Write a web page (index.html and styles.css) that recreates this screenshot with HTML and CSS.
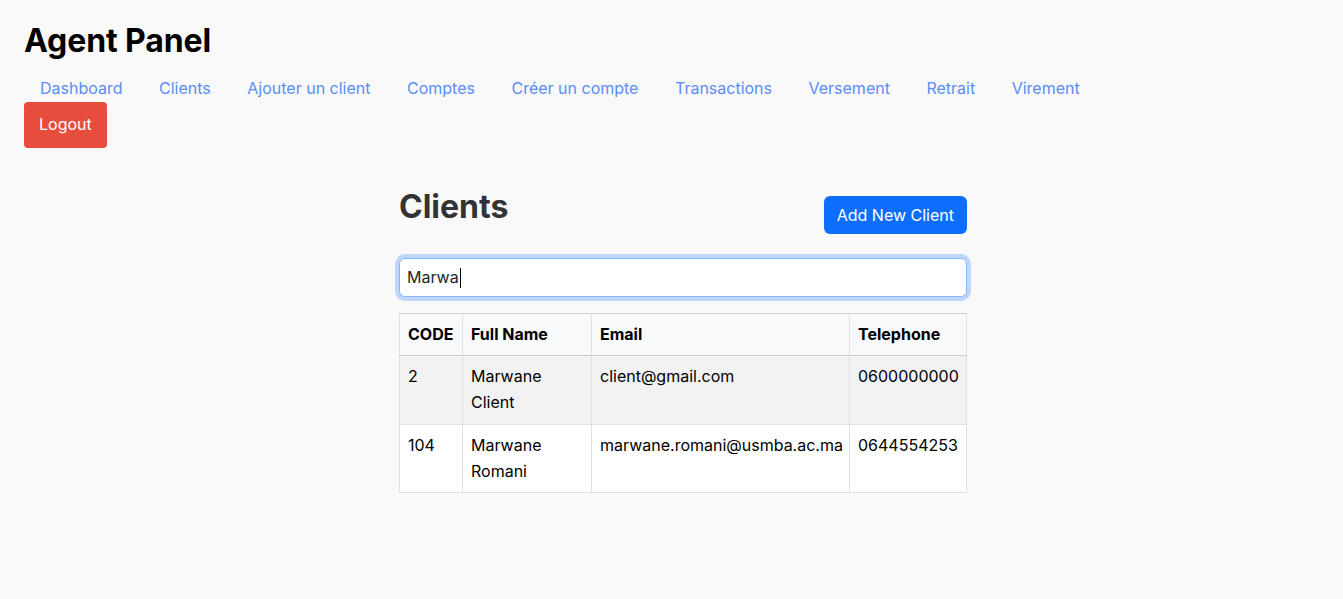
FILE: index.html
```html
<!DOCTYPE html>
<html lang="fr">
<head>
<meta charset="utf-8">
<title>Agent Panel</title>
<link rel="stylesheet" href="styles.css">
</head>
<body>
<header class="header">
  <h1 class="title">Agent Panel</h1>
  <nav class="nav">
    <a class="nav-link" href="#">Dashboard</a>
    <a class="nav-link" href="#">Clients</a>
    <a class="nav-link" href="#">Ajouter un client</a>
    <a class="nav-link" href="#">Comptes</a>
    <a class="nav-link" href="#">Créer un compte</a>
    <a class="nav-link" href="#">Transactions</a>
    <a class="nav-link" href="#">Versement</a>
    <a class="nav-link" href="#">Retrait</a>
    <a class="nav-link" href="#">Virement</a>
  </nav>
  <button class="logout" type="button">Logout</button>
</header>
<main class="main">
  <div class="container">
    <div class="page-head">
      <h2 class="page-title">Clients</h2>
      <button class="btn-primary" type="button">Add New Client</button>
    </div>
    <div class="search"><span class="search-text">Marwa</span><span class="caret"></span></div>
    <table class="table">
      <colgroup>
        <col class="c-code"><col class="c-name"><col class="c-email"><col class="c-tel">
      </colgroup>
      <thead>
        <tr><th>CODE</th><th>Full Name</th><th>Email</th><th>Telephone</th></tr>
      </thead>
      <tbody>
        <tr class="striped"><td>2</td><td>Marwane Client</td><td>client@gmail.com</td><td>0600000000</td></tr>
        <tr><td>104</td><td>Marwane Romani</td><td>marwane.romani@usmba.ac.ma</td><td>0644554253</td></tr>
      </tbody>
    </table>
  </div>
</main>
</body>
</html>
```
FILE: styles.css
```css
* { box-sizing: border-box; }
html, body { margin: 0; padding: 0; }
body {
  background: #f9f9f9;
  font-family: Inter, "Noto Sans", sans-serif;
  font-size: 16px;
  line-height: 1.6;
  color: #000;
}
.header { padding: 22px 24px 0; }
.title {
  margin: 0;
  font-size: 32px;
  line-height: 1.2;
  font-weight: 700;
  color: #000;
  letter-spacing: -0.1px;
}
.nav { margin-top: 16px; line-height: 25.6px; height: 25.6px; }
.nav-link {
  color: #5a8dfa;
  text-decoration: none;
  padding: 0 16px;
}
.logout {
  display: block;
  margin-top: 0;
  background: #e74c3c;
  color: #fff;
  border: 0;
  border-radius: 4px;
  padding: 10px 15px 12px;
  font: inherit;
  line-height: 24px;
}
.main { padding-left: 23px; margin-top: 38px; }
.container { width: 568px; margin: 0 auto; }
.page-head {
  display: flex;
  justify-content: space-between;
  align-items: center;
}
.page-title {
  margin: 2px 0 18px;
  font-size: 32px;
  line-height: 1.2;
  font-weight: 700;
  color: #333;
}
.btn-primary {
  background: #0d6efd;
  color: #fff;
  border: 0;
  border-radius: 6px;
  padding: 7px 13px;
  font: inherit;
  line-height: 24px;
}
.search {
  margin-top: 14px;
  height: 39px;
  background: #fff;
  border: 1px solid #86b7fe;
  border-radius: 6px;
  box-shadow: 0 0 0 4px rgba(13, 110, 253, 0.25);
  padding: 6px 7px;
  display: flex;
  align-items: center;
  font-size: 16px;
  color: #212529;
}
.caret {
  display: inline-block;
  width: 1px;
  height: 20px;
  background: #000;
  margin-left: 1px;
}
.table {
  margin-top: 16px;
  width: 567px;
  border-collapse: collapse;
  table-layout: fixed;
  background: #fff;
}
.c-code { width: 63px; }
.c-name { width: 129px; }
.c-email { width: 258px; }
.c-tel { width: 117px; }
.table th, .table td {
  border: 1px solid #dee2e6;
  padding: 8px;
  text-align: left;
  vertical-align: top;
}
.table th {
  background: #f8f9fa;
  font-weight: 700;
  border-bottom-color: #c9ccd0;
  border-top-color: #d0d3d6;
  padding-bottom: 7px;
}
.table td { font-weight: 400; }
.striped td { background: #f2f2f2; padding-bottom: 9px; }
.table tbody td:first-child, .table th:first-child { padding-right: 4px; }
.table td:last-child, .table th:last-child { padding-right: 0; }
```
